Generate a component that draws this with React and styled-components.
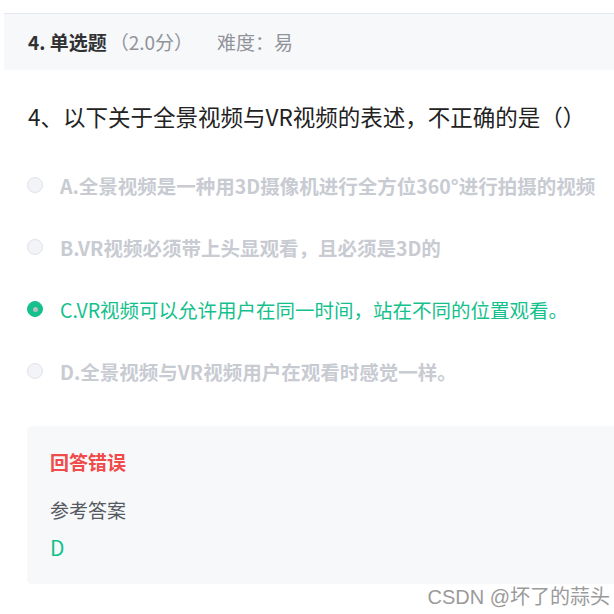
import React from "react";
import styled, { createGlobalStyle } from "styled-components";

const Global = createGlobalStyle`
  html, body { margin: 0; padding: 0; background: #ffffff; }
  body { font-family: "Noto Sans CJK SC", "Noto Sans", sans-serif; }
`;

const Page = styled.div`
  width: 614px;
  height: 614px;
  padding: 13px 0 0 4px;
  box-sizing: border-box;
  overflow: hidden;
  display: flex;
  flex-direction: column;
`;

const Header = styled.div`
  height: 56px;
  border-top: 1px solid #e4e7ed;
  background: #f7f8fa;
  display: flex;
  align-items: center;
  padding-left: 24px;
  font-size: 19px;
  line-height: 26px;
`;

const Type = styled.span`
  font-weight: 700;
  color: #303133;
`;

const Score = styled.span`
  color: #909399;
  margin-left: 3px;
`;

const Difficulty = styled.span`
  color: #909399;
  margin-left: 24px;
`;

const Question = styled.div`
  margin-top: 31px;
  padding-left: 24px;
  font-size: 22.5px;
  line-height: 30px;
  color: #222;
`;

const Options = styled.div`
  margin-top: 23px;
  display: flex;
  flex-direction: column;
`;

const Option = styled.div`
  height: 62px;
  display: flex;
  align-items: center;
  padding-left: 23px;
  font-size: 19.5px;
  font-weight: ${(p) => (p.$selected ? 400 : 700)};
  color: ${(p) => (p.$selected ? "#14c08c" : "#c8cbd2")};
`;

const Radio = styled.span`
  width: 16px;
  height: 16px;
  border-radius: 50%;
  box-sizing: border-box;
  flex: none;
  display: flex;
  align-items: center;
  justify-content: center;
  border: 1px solid ${(p) => (p.$checked ? "#14c08c" : "#dfe2e8")};
  background: ${(p) => (p.$checked ? "#14c08c" : "#f2f4f7")};
  margin-right: 17px;
  &::after {
    content: "";
    width: 5px;
    height: 5px;
    border-radius: 50%;
    background: ${(p) => (p.$checked ? "#b9bdc4" : "transparent")};
  }
`;

const AnswerBox = styled.div`
  margin: 24px 0 0 23px;
  padding: 22px 23px 23px;
  background: #f7f8fa;
  border-radius: 5px 0 0 5px;
  display: flex;
  flex-direction: column;
`;

const Verdict = styled.div`
  font-size: 19px;
  line-height: 28px;
  font-weight: 700;
  color: #f04a4a;
`;

const RefLabel = styled.div`
  margin-top: 20px;
  font-size: 19px;
  line-height: 28px;
  color: #555a61;
`;

const RefAnswer = styled.div`
  margin-top: 9px;
  font-size: 21px;
  line-height: 28px;
  color: #14c08c;
`;

const Watermark = styled.div`
  align-self: flex-end;
  margin-top: 0;
  margin-right: 4px;
  font-family: "Liberation Sans", "Noto Sans CJK SC", sans-serif;
  font-size: 20px;
  line-height: 26px;
  color: #9a9a9a;
`;

const options = [
  { key: "A", text: "全景视频是一种用3D摄像机进行全方位360°进行拍摄的视频" },
  { key: "B", text: "VR视频必须带上头显观看，且必须是3D的" },
  { key: "C", text: "VR视频可以允许用户在同一时间，站在不同的位置观看。", selected: true },
  { key: "D", text: "全景视频与VR视频用户在观看时感觉一样。" },
];

export default function App() {
  return (
    <>
      <Global />
      <Page>
        <Header>
          <Type>4. 单选题</Type>
          <Score>（2.0分）</Score>
          <Difficulty>难度：易</Difficulty>
        </Header>
        <Question>4、以下关于全景视频与VR视频的表述，不正确的是（）</Question>
        <Options>
          {options.map((o) => (
            <Option key={o.key} $selected={o.selected}>
              <Radio $checked={o.selected} />
              <span>
                {o.key}.{o.text}
              </span>
            </Option>
          ))}
        </Options>
        <AnswerBox>
          <Verdict>回答错误</Verdict>
          <RefLabel>参考答案</RefLabel>
          <RefAnswer>D</RefAnswer>
        </AnswerBox>
        <Watermark>CSDN @坏了的蒜头</Watermark>
      </Page>
    </>
  );
}
